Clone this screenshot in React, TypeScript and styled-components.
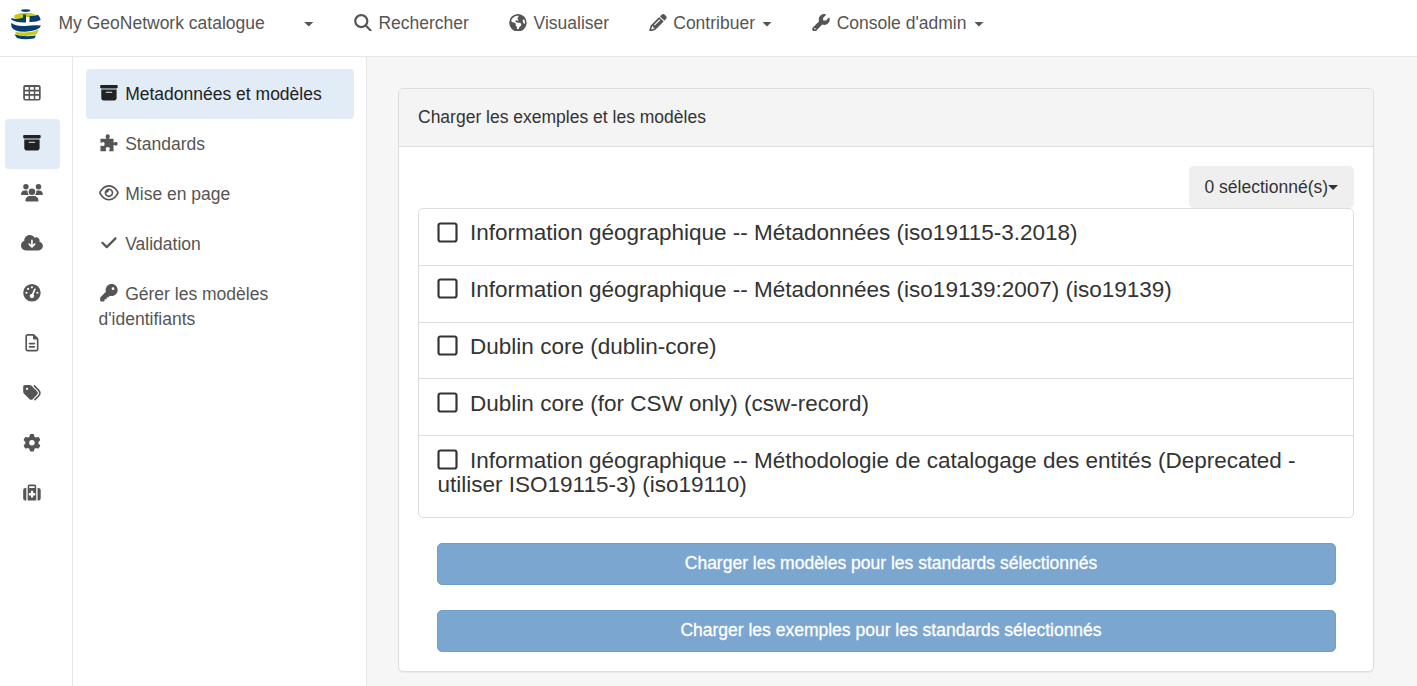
import React from "react";
import styled, { createGlobalStyle, css } from "styled-components";
import {
  FaBoxArchive,
  FaCheck,
  FaCloudArrowDown,
  FaEarthAmericas,
  FaGaugeHigh,
  FaGear,
  FaKey,
  FaMagnifyingGlass,
  FaPencil,
  FaRegEye,
  FaRegFileLines,
  FaRegSquare,
  FaTags,
  FaUsers,
  FaWrench,
} from "react-icons/fa6";

const GlobalStyle = createGlobalStyle`
  * { box-sizing: border-box; }
  body {
    margin: 0;
    overflow: hidden;
    font: 17.5px/25px "Liberation Sans", Arial, sans-serif;
    color: #333;
    background: #f6f6f6;
  }
`;

const Page = styled.div`
  display: flex;
  flex-direction: column;
  height: 686px;
`;

const NavBar = styled.nav`
  display: flex;
  flex: none;
  height: 57px;
  padding: 11px 0 0 10px;
  background: #fff;
  border-bottom: 1px solid #e7e7e7;
  color: #555;
`;

const LogoMark = styled.svg`
  width: 32px;
  height: 32px;
  margin-top: -2px;
`;

const NavItem = styled.a<{ $ml: number }>`
  display: flex;
  height: 25px;
  align-items: center;
  margin-left: ${(p) => p.$ml}px;
  white-space: nowrap;
`;

const Caret = styled.span<{ $ml: number }>`
  width: 10px;
  height: 5px;
  margin: 1px 0 0 ${(p) => p.$ml}px;
  background: currentColor;
  clip-path: polygon(0 0, 100% 0, 50% 100%);
`;

const iconSize = css`
  width: 21.875px;
  height: 17.5px;
  flex: none;
`;

const NavIcon = styled.span`
  display: flex;
  margin-right: 4.8px;
  margin-top: -2px;
  svg { ${iconSize} }
`;

const Body = styled.div`
  display: flex;
  flex: 1;
  min-height: 0;
`;

const Rail = styled.aside`
  width: 73px;
  flex: none;
  padding: 12px 12px 0 5px;
  background: #fff;
  border-right: 1px solid #e7e7e7;
`;

const RailItem = styled.a<{ $active?: boolean }>`
  display: flex;
  height: 50px;
  padding: 0 0.4px 2px 0;
  align-items: center;
  justify-content: center;
  border-radius: 4px;
  color: ${(p) => (p.$active ? "#222" : "#555")};
  background: ${(p) => (p.$active ? "#e2ecf6" : "transparent")};
  svg { ${iconSize} }
`;

const SideMenu = styled.aside`
  width: 294px;
  flex: none;
  padding: 12px 12px 0 13px;
  background: #fff;
  border-right: 1px solid #e7e7e7;
`;

const SideItem = styled.a<{ $active?: boolean }>`
  display: block;
  padding: 12.5px;
  border-radius: 4px;
  color: ${(p) => (p.$active ? "#222" : "#555")};
  background: ${(p) => (p.$active ? "#e2ecf6" : "transparent")};
  svg {
    ${iconSize}
    vertical-align: -2.4px;
    margin: 0 5px 0 -0.2px;
  }
`;

const Main = styled.main`
  flex: 1;
  padding: 31px 43px 0 31px;
`;

const Panel = styled.section`
  height: 584px;
  background: #fff;
  border: 1px solid #ddd;
  border-radius: 5px;
  box-shadow: 0 1px 1px rgba(0, 0, 0, 0.05);
`;

const PanelHeading = styled.header`
  height: 58px;
  padding: 16px 19px;
  background: #f4f4f4;
  border-bottom: 1px solid #ddd;
  border-radius: 4px 4px 0 0;
`;

const PanelBody = styled.div`
  display: flex;
  flex-direction: column;
  padding: 19px 19px 0;
`;

const SelectionButton = styled.button`
  display: flex;
  align-self: flex-end;
  align-items: center;
  width: 165px;
  height: 42px;
  padding: 0 0 0 15.5px;
  border: 0;
  border-radius: 5px;
  background: #efefef;
  color: #333;
  font: inherit;
`;

const StandardList = styled.ul`
  margin: 0;
  padding: 0;
  list-style: none;
  border: 1px solid #ddd;
  border-radius: 5px;
`;

const StandardItem = styled.li`
  padding: 12.4px 18.75px 19px 18.5px;
  font-size: 22.5px;
  line-height: 24.4px;
  & + & { border-top: 1px solid #ddd; }
  &:last-child { padding-bottom: 20px; }
  svg {
    width: 23px;
    height: 23px;
    margin: -6px 10.9px 0 -1.3px;
    vertical-align: -3.2px;
  }
`;

const Actions = styled.div`
  display: flex;
  flex-direction: column;
  gap: 25px;
  padding: 25px 18px 0 19px;
`;

const LoadButton = styled.button`
  height: 42px;
  padding: 0 0 2px 9px;
  border: 1px solid #719dc9;
  border-radius: 5px;
  background: #7ba6d0;
  color: #fff;
  font: inherit;
  -webkit-text-stroke: 0.3px #fff;
`;

const Logo = () => (
  <LogoMark viewBox="0 0 32 32">
    <ellipse cx="15.7" cy="1.6" rx="4.6" ry="1.4" fill="#0b416f" />
    <path d="M4.5 6Q15.5 1.5 27 6L25 8.5Q21 11.5 14 11.5Q8 11.5 4 8.5Z" fill="#c7c91e" />
    <path d="M1.5 9Q7 11 13 8.8V5.5H16V13.5Q6 14 1.2 10.5Z" fill="#063e71" />
    <path d="M19.5 7Q25 7.5 28 5.8Q30.5 8.5 30.7 11Q26 13.5 19 13Z" fill="#063e71" />
    <path d="M16.2 8H19.4V13.5H16.2Z" fill="#fff" />
    <path d="M1 14Q6 17.5 15 17Q25 15.8 31 16.5Q29.5 22 15 22.8Q4 23 1.5 18Z" fill="#063e71" />
    <path d="M5.5 23Q20 24.5 29 20.5Q28 23.5 26 25.5Q15 28.3 5.5 25.5Z" fill="#c7c91e" />
    <path d="M4.5 25.5Q14 28.3 26 26.5L24.5 29.3Q15 31.3 7 29Z" fill="#063e71" />
  </LogoMark>
);

const TableIcon = () => (
  <svg viewBox="-2 0 22 18" fill="currentColor">
    <path
      fillRule="evenodd"
      d="M2.3 1H15.7A2.3 2.3 0 0 1 18 3.3V14.7A2.3 2.3 0 0 1 15.7 17H2.3A2.3 2.3 0 0 1 0 14.7V3.3A2.3 2.3 0 0 1 2.3 1Z
      M1.8 3.2V6H5.6V3.2Z M7.1 3.2V6H10.9V3.2Z M12.4 3.2V6H16.2V3.2Z
      M1.8 7.6V10.4H5.6V7.6Z M7.1 7.6V10.4H10.9V7.6Z M12.4 7.6V10.4H16.2V7.6Z
      M1.8 12V14.8Q1.8 15.3 2.3 15.3H5.6V12Z M7.1 12V15.3H10.9V12Z M12.4 12V15.3H15.7Q16.2 15.3 16.2 14.8V12Z"
    />
  </svg>
);

const MedicalCaseIcon = () => (
  <svg viewBox="-2 0 22 18" fill="currentColor">
    <path d="M2.2 4H3.2V17H2.2Q0 17 0 14.8V6.2Q0 4 2.2 4ZM15.8 4H14.8V17H15.8Q18 17 18 14.8V6.2Q18 4 15.8 4Z" />
    <path
      fillRule="evenodd"
      d="M4.6 17V2.2Q4.6 0.6 6.2 0.6H11.8Q13.4 0.6 13.4 2.2V17ZM6.2 2.3V4H11.8V2.3ZM8 7V9.2H5.8V11.7H8V13.9H10.2V11.7H12.4V9.2H10.2V7Z"
    />
  </svg>
);

const PuzzleIcon = () => (
  <svg viewBox="-2 0 22 18" fill="currentColor">
    <path
      d="M0.3 5H5.6Q6.6 5 6.3 4Q5.6 3.2 5.6 2.2Q5.8 0.2 7.8 0.2Q9.8 0.3 9.9 2.2Q9.8 3.2 9.2 4Q9 5 9.9 5H13.7V8.1
      Q13.9 9.3 15 8.6Q15.6 8 16.4 8Q18 8.3 18 10Q17.9 11.8 16.3 12Q15.4 12 14.8 11.4Q13.8 11 13.7 12V17.7H9.7
      Q9 17.4 9.3 16.5Q10 15.8 10 15Q9.7 13.3 7.7 13.3Q5.8 13.4 5.6 15Q5.6 15.8 6.2 16.5Q6.5 17.5 5.6 17.7H0.3V12.4
      Q0.6 11.5 1.5 12Q2.2 12.5 3 12.4Q4.5 12.1 4.6 10.3Q4.5 8.5 3 8.3Q2.1 8.3 1.5 8.9Q0.6 9.3 0.3 8.4Z"
    />
  </svg>
);

const railIcons = [
  TableIcon,
  FaBoxArchive,
  FaUsers,
  FaCloudArrowDown,
  FaGaugeHigh,
  FaRegFileLines,
  FaTags,
  FaGear,
  MedicalCaseIcon,
];

const sideItems = [
  { icon: FaBoxArchive, label: "Metadonnées et modèles" },
  { icon: PuzzleIcon, label: "Standards" },
  { icon: FaRegEye, label: "Mise en page" },
  { icon: FaCheck, label: "Validation" },
  { icon: FaKey, label: "Gérer les modèles d'identifiants" },
];

const standards = [
  "Information géographique -- Métadonnées (iso19115-3.2018)",
  "Information géographique -- Métadonnées (iso19139:2007) (iso19139)",
  "Dublin core (dublin-core)",
  "Dublin core (for CSW only) (csw-record)",
  "Information géographique -- Méthodologie de catalogage des entités (Deprecated - utiliser ISO19115-3) (iso19110)",
];

export default function App() {
  return (
    <Page>
      <GlobalStyle />
      <NavBar>
        <Logo />
        <NavItem $ml={16.5}>
          My GeoNetwork catalogue
          <Caret $ml={39} />
        </NavItem>
        <NavItem $ml={38}>
          <NavIcon><FaMagnifyingGlass /></NavIcon>
          Rechercher
        </NavItem>
        <NavItem $ml={38}>
          <NavIcon><FaEarthAmericas /></NavIcon>
          Visualiser
        </NavItem>
        <NavItem $ml={37.5}>
          <NavIcon><FaPencil /></NavIcon>
          Contribuer
          <Caret $ml={7} />
        </NavItem>
        <NavItem $ml={38}>
          <NavIcon><FaWrench /></NavIcon>
          Console d'admin
          <Caret $ml={7.5} />
        </NavItem>
      </NavBar>
      <Body>
        <Rail>
          {railIcons.map((Icon, i) => (
            <RailItem key={i} $active={i === 1}>
              <Icon />
            </RailItem>
          ))}
        </Rail>
        <SideMenu>
          {sideItems.map(({ icon: Icon, label }, i) => (
            <SideItem key={label} $active={i === 0}>
              <Icon />
              {label}
            </SideItem>
          ))}
        </SideMenu>
        <Main>
          <Panel>
            <PanelHeading>Charger les exemples et les modèles</PanelHeading>
            <PanelBody>
              <SelectionButton>
                0 sélectionné(s)
                <Caret $ml={0} />
              </SelectionButton>
              <StandardList>
                {standards.map((name) => (
                  <StandardItem key={name}>
                    <FaRegSquare />
                    {name}
                  </StandardItem>
                ))}
              </StandardList>
              <Actions>
                <LoadButton>Charger les modèles pour les standards sélectionnés</LoadButton>
                <LoadButton>Charger les exemples pour les standards sélectionnés</LoadButton>
              </Actions>
            </PanelBody>
          </Panel>
        </Main>
      </Body>
    </Page>
  );
}
